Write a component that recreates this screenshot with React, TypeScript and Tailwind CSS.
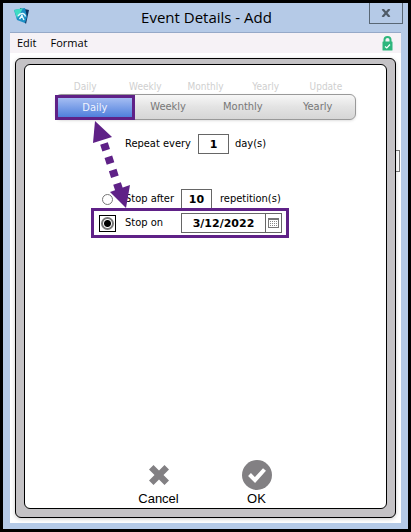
import { ReactNode, useState } from "react";

const TABS = ["Daily", "Weekly", "Monthly", "Yearly"];
const GHOST_LABELS = ["Daily", "Weekly", "Monthly", "Yearly", "Update"];

const AppLogo = () => (
  <svg width={18} height={18} viewBox="0 0 18 18" aria-hidden="true">
    <path d="M8 1 L17 3 L14 17 L10 12 Z" fill="#0f3563" />
    <path d="M2 3 L13 1 L15 10 L13 16 L5 13 Z" fill="#1b8fc4" />
    <path d="M2 3 L11 1 L8 7 L5 11 Z" fill="#3fdcc4" />
    <path
      d="M6 9 Q8 6 11 6.5 Q13 7 13.5 9.5 M9.5 8 L12 13 M10.5 8 L7.5 12"
      fill="none"
      stroke="#e6fbff"
      strokeWidth="1.4"
    />
  </svg>
);

const LockIcon = () => (
  <svg width={11} height={15} viewBox="0 0 11 15" aria-label="Secure">
    <path
      d="M2.5 7 V3.8 Q2.5 1 5.5 1 Q8.5 1 8.5 3.8 V7"
      fill="none"
      stroke="#2eb67d"
      strokeWidth="2"
    />
    <rect x="0.5" y="5.5" width="10" height="9" rx="0.5" fill="#2eb67d" />
    <path d="M3 10.5 L4.8 12 L8 8.5" fill="none" stroke="#fff" strokeWidth="1.2" />
  </svg>
);

const CalendarIcon = () => (
  <svg width={11} height={10} viewBox="0 0 11 10" aria-hidden="true">
    <rect x="0.5" y="0.5" width="10" height="9" fill="#fff" stroke="#777" />
    <path d="M1 1.5 H10" stroke="#777" />
    <path
      d="M2 3.5 H9 M2 5.5 H9 M2 7.5 H9"
      stroke="#888"
      strokeDasharray="1 1"
    />
  </svg>
);

const DashedArrow = () => (
  <svg
    width={40}
    height={88}
    viewBox="0 0 40 88"
    className="absolute top-[55px] left-[36px] pointer-events-none"
    aria-hidden="true"
  >
    <g fill="#5f2187">
      <path d="M4 1 L21 17 L2 23 Z" />
      <path d="M35 88 L19 72 L39 65 Z" />
    </g>
    <path
      d="M13 23.5 L29.5 74"
      stroke="#5f2187"
      strokeWidth="8"
      strokeDasharray="7 7"
    />
  </svg>
);

const Radio = ({
  id,
  checked,
  onChange,
}: {
  id: string;
  checked: boolean;
  onChange: () => void;
}) => (
  <span
    className={`flex size-[17px] items-center justify-center border ${
      checked ? "border-black" : "border-transparent"
    }`}
  >
    <input
      type="radio"
      id={id}
      name="stop"
      checked={checked}
      onChange={onChange}
      className={`appearance-none rounded-full border-[#777] bg-white ${
        checked
          ? "size-[13px] border-2 bg-[radial-gradient(circle,#000_3px,#fff_4px)]"
          : "size-[11px] border"
      }`}
    />
  </span>
);

const ActionButton = ({ icon, label }: { icon: ReactNode; label: string }) => (
  <button className="flex w-[98px] flex-col items-center font-['Liberation_Sans',sans-serif] text-[13px] leading-[17px] text-black">
    <span className="flex h-[30px] items-center">{icon}</span>
    {label}
  </button>
);

const fieldClass =
  "h-5 border border-[#666] bg-white text-center font-['DejaVu_Sans',sans-serif] text-[11px] font-bold text-black";

export default function App() {
  const [tab, setTab] = useState("Daily");
  const [stop, setStop] = useState("on");

  return (
    <div className="flex min-h-screen flex-col border-3 border-black bg-[#b5cae7] px-[7px] pb-[6px] text-black">
      <header className="flex h-[30px] items-start justify-between border-b border-[#96a9c8]">
        <div className="flex w-[34px] pt-1 pl-0.5">
          <AppLogo />
        </div>
        <h1 className="pt-1 font-['Open_Sans',sans-serif] text-[15px] leading-5">
          Event Details - Add
        </h1>
        <button
          aria-label="Close"
          className="-mr-0.5 flex h-[21px] w-[34px] items-center justify-center border border-t-0 border-[#596775]"
        >
          <svg width={10} height={8} viewBox="0 0 10 8">
            <path d="M1.5 0 L8.5 8 M8.5 0 L1.5 8" stroke="#4f5b68" strokeWidth="2.2" />
          </svg>
        </button>
      </header>

      <nav className="flex h-5 items-center gap-3.5 bg-[#f6f2f6] pr-2 pl-[7px] font-['Open_Sans',sans-serif] text-[11px]">
        <button>Edit</button>
        <button>Format</button>
        <span className="ml-auto">
          <LockIcon />
        </span>
      </nav>

      <div className="relative flex flex-1 flex-col bg-white p-[5px]">
        <span className="absolute top-[97px] right-px h-[22px] w-2 border border-[#777]" />
        <div className="relative flex flex-1 flex-col rounded-md border border-black bg-[#c4c2c5] px-2 pt-[5px] pb-2 shadow-[0_1px_4px_rgba(0,0,0,0.2)]">
          <main className="flex flex-1 flex-col items-center rounded-md border border-black bg-white font-['DejaVu_Sans_Condensed','DejaVu_Sans',sans-serif] text-[11px]">
            <section className="relative flex w-[301px] flex-1 flex-col pt-[14px]">
              <div className="grid grid-cols-5 text-center text-[10px] leading-[15px] text-[#cfcfcf]">
                {GHOST_LABELS.map((label) => (
                  <span key={label}>{label}</span>
                ))}
              </div>

              <div
                role="tablist"
                className="grid h-[26px] grid-cols-4 rounded-md border border-[#999] bg-linear-to-b from-[#f7f7f7] via-[#e3e3e3] to-[#d6d6d6] shadow-sm"
              >
                {TABS.map((label) => (
                  <button
                    key={label}
                    role="tab"
                    aria-selected={tab === label}
                    onClick={() => setTab(label)}
                    className={
                      tab === label
                        ? "z-10 -mr-1 -mb-px -ml-px border-3 border-[#5f2187] bg-linear-to-b from-[#a5bdf2] to-[#4f7fdc] leading-4 text-[#f0f3fc]"
                        : "text-[#777]"
                    }
                  >
                    {label}
                  </button>
                ))}
              </div>

              <div className="mt-[14px] flex items-center pl-[70px]">
                <label htmlFor="every" className="w-[73px]">
                  Repeat every
                </label>
                <input id="every" defaultValue="1" className={`${fieldClass} w-[31px]`} />
                <span className="pl-1.5">day(s)</span>
              </div>

              <div className="mt-[35px] flex items-center pl-11">
                <Radio id="after" checked={stop === "after"} onChange={() => setStop("after")} />
                <label htmlFor="after" className="ml-[9px] w-14">
                  Stop after
                </label>
                <input
                  aria-label="Repetitions"
                  defaultValue="10"
                  className={`${fieldClass} w-[31px]`}
                />
                <span className="pl-2">repetition(s)</span>
              </div>

              <div className="-mt-px ml-9 flex h-[30px] w-[198px] items-center border-3 border-[#5f2187] pr-1 pl-[5px]">
                <Radio id="on" checked={stop === "on"} onChange={() => setStop("on")} />
                <label htmlFor="on" className="ml-[9px] w-14">
                  Stop on
                </label>
                <input
                  aria-label="Stop date"
                  defaultValue="3/12/2022"
                  className={`${fieldClass} w-[85px]`}
                />
                <button
                  aria-label="Pick date"
                  className="flex h-5 w-4 items-center justify-center border border-l-0 border-[#666]"
                >
                  <CalendarIcon />
                </button>
              </div>

              <DashedArrow />

              <div className="mt-auto flex justify-center pb-px pl-1">
                <ActionButton
                  label="Cancel"
                  icon={
                    <svg width={20} height={20} viewBox="0 0 20 20">
                      <path
                        d="M4.5 0 L10 5.5 L15.5 0 L20 4.5 L14.5 10 L20 15.5 L15.5 20 L10 14.5 L4.5 20 L0 15.5 L5.5 10 L0 4.5 Z"
                        fill="#828083"
                      />
                    </svg>
                  }
                />
                <ActionButton
                  label="OK"
                  icon={
                    <svg width={30} height={30} viewBox="0 0 30 30">
                      <circle cx="15" cy="15" r="15" fill="#828083" />
                      <path
                        d="M7.5 14.5 L13 20 L22.5 9.5"
                        fill="none"
                        stroke="#fff"
                        strokeWidth="4"
                      />
                    </svg>
                  }
                />
              </div>
            </section>
          </main>
        </div>
      </div>
    </div>
  );
}
